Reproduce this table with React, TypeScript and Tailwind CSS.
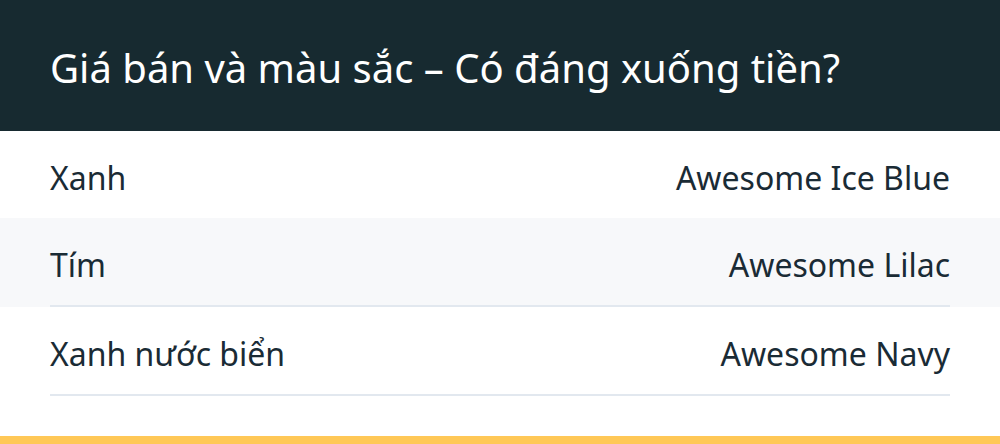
const rows = [
  { label: "Xanh", value: "Awesome Ice Blue", stripe: false, line: false },
  { label: "Tím", value: "Awesome Lilac", stripe: true, line: true },
  { label: "Xanh nước biển", value: "Awesome Navy", stripe: false, line: true },
];

export default function App() {
  return (
    <div className="w-[1000px] h-[444px] bg-white flex flex-col font-['Noto_Sans','Open_Sans',sans-serif] overflow-hidden">
      {/* Heading */}
      <div className="h-[131px] bg-[#172a30] px-[50px] flex items-center">
        <h2 className="text-[40px] text-white leading-none pt-[4px]">
          Giá bán và màu sắc – Có đáng xuống tiền?
        </h2>
      </div>

      {/* Colour table */}
      <div className="flex flex-col">
        {rows.map((r) => (
          <div key={r.label} className={r.stripe ? "bg-[#f7f8fa]" : "bg-white"}>
            <div
              className={
                "mx-[50px] flex items-center justify-between text-[32px] text-[#1a2b35] leading-none pt-[6px] " +
                (r.line ? "h-[89px] border-b-2 border-[#e2e8ef]" : "h-[87px]")
              }
            >
              <span>{r.label}</span>
              <span>{r.value}</span>
            </div>
          </div>
        ))}
      </div>

      <div className="flex-1" />
      <div className="h-[8px] bg-[#ffc857]" />
    </div>
  );
}
